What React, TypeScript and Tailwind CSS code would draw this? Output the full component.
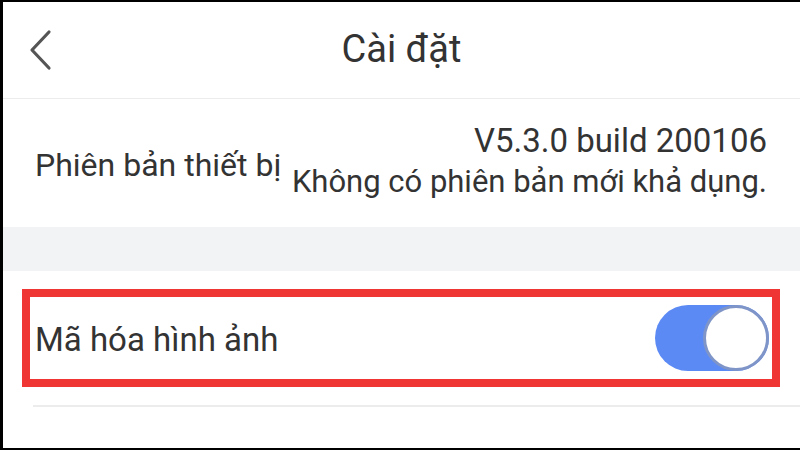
export default function App() {
  return (
    <div
      className="w-[800px] h-[450px] overflow-hidden bg-white border-t-2 border-l-[3px] border-b-2 border-black flex flex-col text-[#333333]"
      style={{ fontFamily: 'Roboto, "Noto Sans", sans-serif' }}
    >
      {/* header */}
      <div className="h-[97px] shrink-0 grid grid-cols-[1fr_auto_1fr] items-center border-b border-[#ececec]">
        <div className="pl-[24px] flex items-center">
          <svg width="28" height="44" viewBox="0 0 28 44" fill="none">
            <path d="M22 4 L5 22 L22 40" stroke="#555555" strokeWidth="3.2" strokeLinecap="round" strokeLinejoin="round" />
          </svg>
        </div>
        <div className="text-[38px] leading-none text-[#333333] pb-[2px]">Cài đặt</div>
        <div />
      </div>

      {/* version */}
      <div className="h-[128px] shrink-0 flex items-center justify-between pl-[32px] pr-[33px]">
        <div className="text-[32px] leading-none pt-[4px] whitespace-nowrap">Phiên bản thiết bị</div>
        <div className="flex flex-col items-end text-[31px] leading-[41px] pb-[4px] whitespace-nowrap">
          <span className="text-[33px]">V5.3.0 build 200106</span>
          <span>Không có phiên bản mới khả dụng.</span>
        </div>
      </div>

      <div className="h-[44px] shrink-0 bg-[#f2f3f5]" />

      {/* image encryption row, highlighted */}
      <div className="mt-[18px] ml-[19px] w-[758px] h-[98px] border-[8px] border-[#f03535] flex items-center justify-between pl-[5px] pr-[3px]">
        <span className="text-[33px] leading-none pt-[2px]">Mã hóa hình ảnh</span>
        <div className="w-[114px] h-[66px] rounded-full bg-[#5b8af5] flex items-center justify-end">
          <div className="w-[66px] h-[66px] rounded-full bg-white border-[3px] border-[#7f95c8]" />
        </div>
      </div>

      <div className="mt-[18px] ml-[30px] border-t-[2px] border-[#ececec]" />
    </div>
  );
}
